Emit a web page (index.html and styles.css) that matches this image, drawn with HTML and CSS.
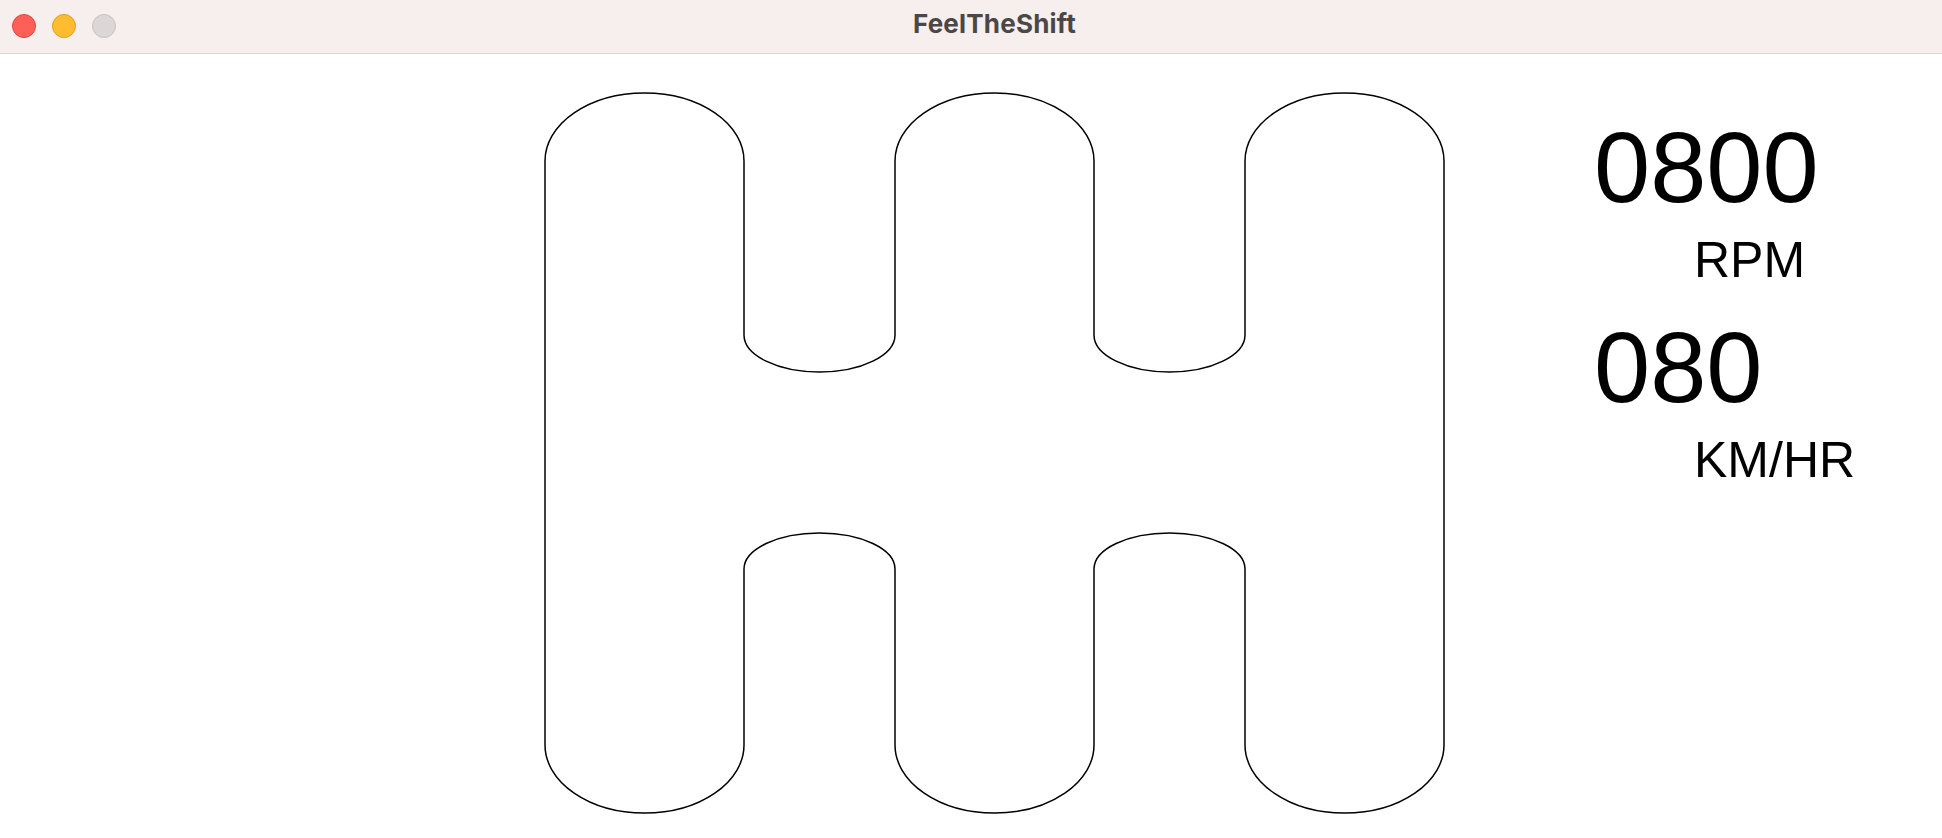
FILE: index.html
```html
<!DOCTYPE html>
<html lang="en">
<head>
<meta charset="utf-8">
<title>FeelTheShift</title>
<link rel="stylesheet" href="styles.css">
</head>
<body>
<div class="window">
  <header class="titlebar">
    <div class="lights">
      <span class="light light-close"></span>
      <span class="light light-min"></span>
      <span class="light light-max"></span>
    </div>
    <div class="title">FeelTheShift</div>
    <div class="spacer"></div>
  </header>
  <main class="content">
    <svg class="gate" viewBox="540 54 910 784" width="910" height="784" aria-hidden="true">
      <path d="M 545 161
               A 99.5 68 0 0 1 744 161
               L 744 335
               A 75.5 37 0 0 0 895 335
               L 895 161
               A 99.5 68 0 0 1 1094 161
               L 1094 335
               A 75.5 37 0 0 0 1245 335
               L 1245 161
               A 99.5 68 0 0 1 1444 161
               L 1444 745
               A 99.5 68 0 0 1 1245 745
               L 1245 569
               A 75.5 36 0 0 0 1094 569
               L 1094 745
               A 99.5 68 0 0 1 895 745
               L 895 569
               A 75.5 36 0 0 0 744 569
               L 744 745
               A 99.5 68 0 0 1 545 745
               Z" fill="none" stroke="#000" stroke-width="1.5"/>
    </svg>
    <section class="readout">
      <div class="stat">
        <div class="value">0800</div>
        <div class="unit">RPM</div>
      </div>
      <div class="stat">
        <div class="value">080</div>
        <div class="unit">KM/HR</div>
      </div>
    </section>
  </main>
</div>
</body>
</html>
```

FILE: styles.css
```css
html, body {
  margin: 0;
  padding: 0;
  background: #ffffff;
}

.window {
  width: 1942px;
  height: 838px;
  overflow: hidden;
  display: flex;
  flex-direction: column;
}

.titlebar {
  height: 53px;
  border-bottom: 1px solid #dcd6d6;
  background: #f7eeee;
  display: grid;
  grid-template-columns: 1fr auto 1fr;
  align-items: start;
  flex: none;
}

.lights {
  display: flex;
  gap: 16px;
  padding: 14px 0 0 12px;
}

.light {
  width: 24px;
  height: 24px;
  border-radius: 50%;
  box-sizing: border-box;
  display: block;
}

.light-close {
  background: #fe5f57;
  border: 1px solid #e2463f;
}

.light-min {
  background: #febc2e;
  border: 1px solid #dfa023;
}

.light-max {
  background: #ddd6d6;
  border: 1px solid #c8c1c1;
}

.title {
  font-family: Inter, "Liberation Sans", sans-serif;
  font-weight: 700;
  font-size: 26px;
  letter-spacing: 0.2px;
  line-height: 47px;
  color: #4b4747;
  padding-left: 47px;
}

.content {
  flex: 1;
  display: flex;
  align-items: flex-start;
}

.gate {
  display: block;
  margin-left: 540px;
  flex: none;
}

.readout {
  margin-left: 144px;
  padding-top: 62px;
  font-family: "Liberation Sans", Arial, sans-serif;
  color: #000;
}

.stat + .stat {
  margin-top: 31px;
}

.value {
  font-size: 101px;
  line-height: 102px;
}

.unit {
  margin-top: 17px;
  margin-left: 100px;
  font-size: 50px;
  line-height: 50px;
}
```
